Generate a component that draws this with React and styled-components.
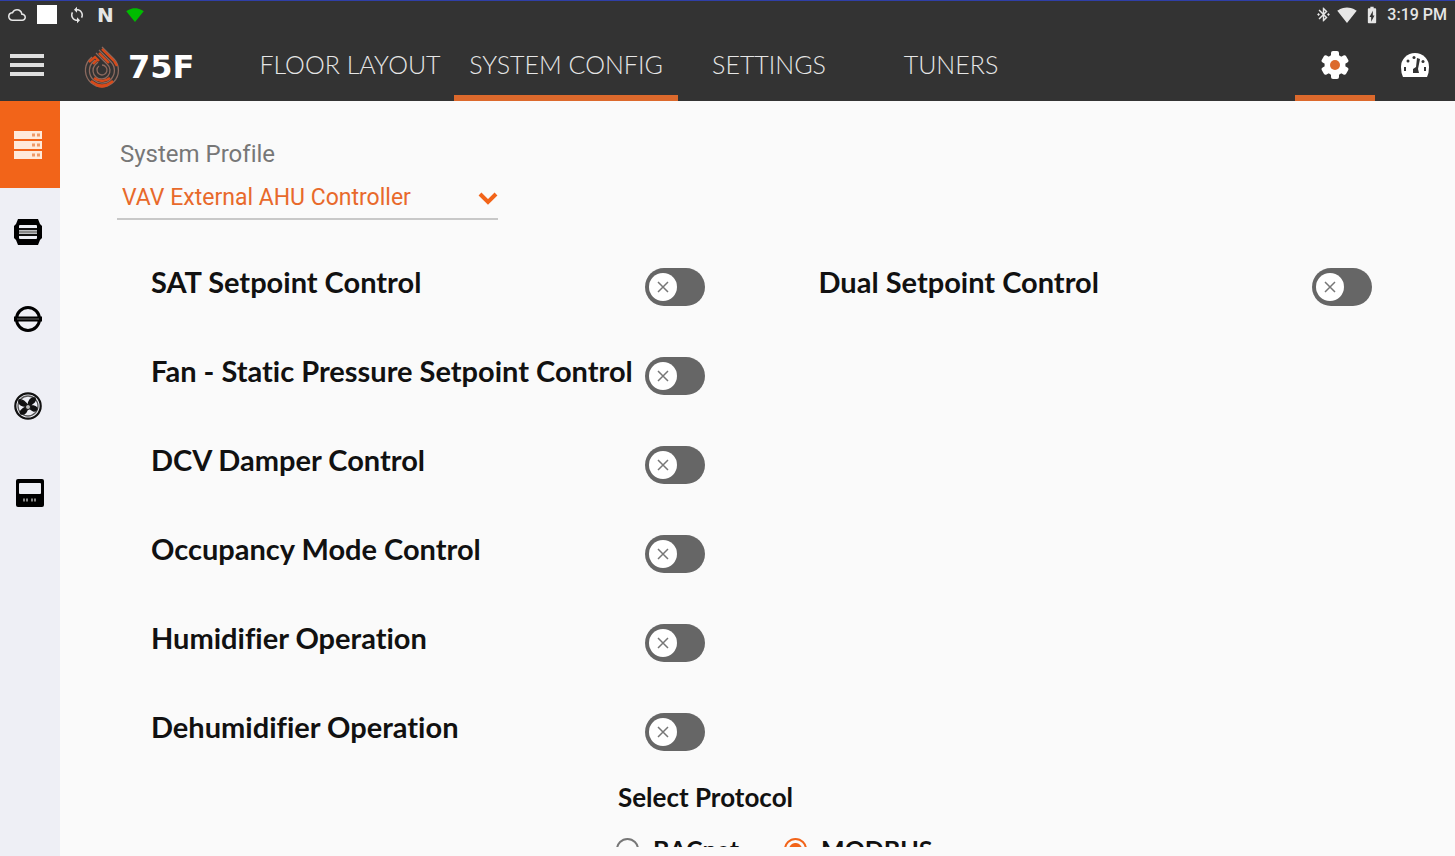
import React, { useState } from "react";
import styled, { createGlobalStyle, css } from "styled-components";
import {
  MdBatteryChargingFull,
  MdBluetoothConnected,
  MdSignalWifi4Bar,
  MdOutlineCloud,
  MdSync,
} from "react-icons/md";

const GlobalStyle = createGlobalStyle`
  * {
    box-sizing: border-box;
  }

  body {
    margin: 0;
    background-color: #fafafa;
    font-family: Lato, "Liberation Sans", sans-serif;
    font-variant-ligatures: none;
    color: #111;
  }
`;

// Styled components
const Screen = styled.div`
  display: flex;
  flex-direction: column;
  height: 100vh;
  overflow: hidden;
`;

const StatusBar = styled.div`
  display: flex;
  flex: none;
  align-items: center;
  justify-content: space-between;
  height: 28px;
  padding: 0 8px;
  border-top: 1px solid #2f3fa8;
  background-color: #333;
  color: #e6e6e6;
  font-family: Roboto, sans-serif;
  font-size: 16px;
  font-weight: 500;
`;

const StatusGroup = styled.div`
  display: flex;
  align-items: center;
  gap: ${(props) => props.$gap};
`;

const WhiteSquare = styled.span`
  width: 20px;
  height: 19px;
  background-color: #fff;
`;

const NotificationLetter = styled.span`
  width: 18px;
  font-family: "DejaVu Sans", sans-serif;
  font-size: 20px;
  font-weight: 700;
  line-height: 20px;
`;

const Header = styled.header`
  display: flex;
  flex: none;
  align-items: stretch;
  height: 73px;
  background-color: #333;
`;

const MenuButton = styled.button`
  display: flex;
  align-items: center;
  width: 60px;
  padding: 0 0 0 10px;
  border: none;
  background: none;
`;

const Brand = styled.a`
  display: flex;
  align-items: center;
  gap: 8px;
  width: 186px;
  padding: 4px 0 0 24px;
  color: #fff;
  text-decoration: none;
`;

const BrandName = styled.span`
  font-family: "DejaVu Sans", sans-serif;
  font-size: 32px;
  font-weight: 700;
  line-height: 32px;
`;

const Tabs = styled.nav`
  display: flex;
  flex: 1;
`;

const activeBar = css`
  border-bottom: 6px solid ${(props) => (props.$active ? "#dc692c" : "transparent")};
`;

const Tab = styled.a`
  display: flex;
  align-items: center;
  justify-content: center;
  min-width: ${(props) => props.$width};
  padding: 4px 12px 0;
  ${activeBar}
  color: #e6e6e6;
  font-size: 25px;
  font-weight: 300;
  text-decoration: none;
  white-space: nowrap;
`;

const HeaderButton = styled.button`
  display: flex;
  align-items: center;
  justify-content: center;
  width: 80px;
  padding: 6px 0 0;
  border: none;
  ${activeBar}
  background: none;
`;

const Body = styled.div`
  display: flex;
  flex: 1;
  min-height: 0;
`;

const Sidebar = styled.nav`
  flex: none;
  width: 60px;
  background-color: #eeeff5;
`;

const SideLink = styled.a`
  display: flex;
  align-items: center;
  height: 87px;
  padding-left: 14px;
  background-color: ${(props) => (props.$active ? "#f26419" : "transparent")};
  color: #000;
`;

const Content = styled.main`
  flex: 1;
  margin-bottom: 9px;
  padding: 38px 83px 0 57px;
  overflow: hidden;
`;

const ProfileField = styled.div`
  display: flex;
  flex-direction: column;
  width: 381px;
  font-family: Roboto, sans-serif;
`;

const ProfileLabel = styled.label`
  padding-left: 3px;
  color: #777;
  font-size: 24px;
  line-height: 30px;
`;

const SelectBox = styled.div`
  display: grid;
  align-items: center;
  margin-top: 8px;
  border-bottom: 2px solid #c8c8c8;

  & > * {
    grid-area: 1 / 1;
  }

  svg {
    justify-self: end;
    pointer-events: none;
  }
`;

const Select = styled.select`
  height: 41px;
  padding: 0 30px 0 5px;
  border: none;
  appearance: none;
  background: none;
  color: #e8692b;
  font-family: inherit;
  font-size: 23px;
`;

const OptionGrid = styled.div`
  display: grid;
  grid-template-columns: 1fr 1fr;
  column-gap: 114px;
  grid-auto-rows: 89px;
  margin: 22px 0 0 34px;
`;

const OptionRow = styled.div`
  display: flex;
  align-items: center;
  justify-content: space-between;
  grid-column: ${(props) => props.$column};
`;

const OptionLabel = styled.label`
  padding-bottom: 10px;
  font-size: 29px;
  font-weight: 700;
  line-height: 36px;
  white-space: nowrap;
`;

const Switch = styled.input`
  flex: none;
  width: 60px;
  height: 38px;
  margin: 0;
  border-radius: 19px;
  appearance: none;
  background: ${(props) => (props.checked ? "#e8692b" : "#666")};
`;

const SwitchBox = styled.span`
  display: grid;
  align-items: center;

  & > * {
    grid-area: 1 / 1;
  }

  svg {
    margin: 0 4px;
    justify-self: ${(props) => (props.$on ? "end" : "start")};
    pointer-events: none;
  }
`;

const Protocol = styled.fieldset`
  margin: 6px 0 0 499px;
  padding: 0;
  border: none;
`;

const ProtocolTitle = styled.legend`
  padding: 0 0 0 2px;
  font-size: 26px;
  font-weight: 700;
  line-height: 30px;
`;

const RadioRow = styled.div`
  display: flex;
  margin-top: 22px;
`;

const RadioLabel = styled.label`
  display: flex;
  align-items: center;
  gap: 14px;
  width: 168px;
  font-size: 25px;
  font-weight: 700;
  line-height: 30px;
`;

const Radio = styled.input`
  width: 23px;
  height: 23px;
  margin: 0;
  border: 2px solid ${(props) => (props.checked ? "#f26419" : "#777")};
  border-radius: 50%;
  appearance: none;
  background: ${(props) =>
    props.checked ? "radial-gradient(circle, #f26419 6px, transparent 7px)" : "none"};
`;

// Icons
const MenuIcon = () => (
  <svg width="34" height="24" viewBox="0 0 34 24">
    <path d="M0 3h34M0 12h34M0 21h34" stroke="#e0e0e0" strokeWidth="4" />
  </svg>
);

const FlameIcon = () => (
  <svg width="36" height="44" viewBox="0 0 36 44" fill="none">
    <g stroke="#8c6a5f" strokeWidth="1.3">
      <path d="M18 2 30 14a16.5 16.5 0 1 1-25 1l3-3" />
      <path d="m15 5 12 12a12.5 12.5 0 1 1-19 1l3-3" />
      <path d="m12 8 11 11a8.500 8.500 0 1 1-12 1l3-3" />
      <path d="M18 20a5 5 0 1 1-3 1" />
    </g>
    <g stroke="#d84a1a" strokeWidth="2.4">
      <path d="m18 4 12 12M15 8l10 10" />
      <path d="m5 17 6-5 4 4M9 19l4-4" />
      <path d="M7 36q11 9 22 0M10 33q8 6 16 0M12 40q6 3 12 0" />
      <path d="m30 16 3 5" />
    </g>
  </svg>
);

const GearIcon = () => (
  <svg width="28" height="28" viewBox="0 0 28 28">
    <g fill="#fff">
      <circle cx="14" cy="14" r="10.500" />
      {[0, 60, 120].map((angle) => (
        <rect key={angle} x="10" y="0" width="8" height="28" rx="2" transform={`rotate(${angle} 14 14)`} />
      ))}
    </g>
    <circle cx="14" cy="14" r="5" fill="#dc692c" />
  </svg>
);

const GaugeIcon = () => (
  <svg width="28" height="24" viewBox="0 0 28 24">
    <path d="M2 24q-2-4-2-10a14 14 0 0 1 28 0q0 6-2 10z" fill="#fff" />
    <g fill="#333">
      <circle cx="13" cy="4.500" r="1.500" />
      <circle cx="7" cy="8" r="1.500" />
      <path d="M3 14h2v4H3zM23 14h2v4h-2z" />
      <circle cx="22" cy="8.500" r="1.500" />
      <path d="m16 5 3 1-2 10 1 4h-6v-4l3-2z" />
    </g>
  </svg>
);

const ServerIcon = () => (
  <svg width="28" height="30" viewBox="0 0 28 30">
    {[1, 11, 21].map((y) => (
      <g key={y}>
        <rect y={y} width="28" height="8" fill="#ffeada" />
        <path d={`M18 ${y + 4}h3M23 ${y + 4}h3`} stroke="#f09a66" strokeWidth="3" />
      </g>
    ))}
  </svg>
);

const HubIcon = () => (
  <svg width="28" height="26" viewBox="0 0 28 26">
    <path d="M4 0h20l2 5 2 2v12l-2 2-2 5H4l-2-5-2-2V7l2-2z" />
    <rect x="5" y="6" width="18" height="14" rx="1" fill="#eeeff5" />
    <path d="M5 10h18M5 16h18" stroke="#111" strokeWidth="2" />
    <path d="M5 13h18" stroke="#888" strokeWidth="3" />
  </svg>
);

const DamperIcon = () => (
  <svg width="28" height="28" viewBox="0 0 28 28" fill="none" stroke="#000">
    <circle cx="14" cy="14" r="11.500" strokeWidth="3" />
    <path d="M0 14h28" strokeWidth="5" />
    <path d="M3 14h22" stroke="#333" strokeWidth="2" />
  </svg>
);

const FanIcon = () => (
  <svg width="28" height="28" viewBox="0 0 28 28" fill="none" stroke="#111">
    <circle cx="14" cy="14" r="12.700" strokeWidth="2.200" />
    <circle cx="14" cy="14" r="10" stroke="#555" strokeWidth="1.300" />
    <path
      d="M14 14C8 15 4 12 5 8q4-1 9 6 1-9 7-8 2 4-7 8 8-1 9 3-3 5-9-3-1 9-7 8-3-3 7-8z"
      fill="#111"
      strokeWidth="1.500"
    />
    <circle cx="14" cy="15" r="2.500" fill="#bbb" strokeWidth="1" />
  </svg>
);

const ThermostatIcon = () => (
  <svg width="30" height="28" viewBox="0 0 30 28">
    <rect x="2" width="28" height="28" rx="2" />
    <rect x="5" y="4" width="22" height="11" rx="1" fill="#eeeff5" />
    <path d="M9 21h6M17 21h5" stroke="#888" strokeWidth="3" strokeDasharray="2 1" />
  </svg>
);

const ChevronIcon = () => (
  <svg width="20" height="14" viewBox="0 0 20 14" fill="none">
    <path d="m2 3 8 8 8-8" stroke="#f26419" strokeWidth="4" />
  </svg>
);

const KnobIcon = () => (
  <svg width="28" height="28" viewBox="0 0 28 28">
    <circle cx="14" cy="14" r="14" fill="#fff" />
    <path d="m9 9 10 10M19 9 9 19" stroke="#777" strokeWidth="1.500" />
  </svg>
);

const tabs = [
  { name: "FLOOR LAYOUT", width: "208px" },
  { name: "SYSTEM CONFIG", width: "224px", active: true },
  { name: "SETTINGS", width: "182px" },
  { name: "TUNERS", width: "182px" },
];

const sideLinks = [
  { name: "System", icon: ServerIcon, active: true },
  { name: "Control hub", icon: HubIcon },
  { name: "Damper", icon: DamperIcon },
  { name: "Fan", icon: FanIcon },
  { name: "Thermostat", icon: ThermostatIcon },
];

const options = [
  { name: "SAT Setpoint Control", column: 1 },
  { name: "Dual Setpoint Control", column: 2 },
  { name: "Fan - Static Pressure Setpoint Control", column: 1 },
  { name: "DCV Damper Control", column: 1 },
  { name: "Occupancy Mode Control", column: 1 },
  { name: "Humidifier Operation", column: 1 },
  { name: "Dehumidifier Operation", column: 1 },
];

// Components
function Option({ name, column }) {
  const [on, setOn] = useState(false);
  const id = name.toLowerCase().replace(/\W+/g, "-");

  return (
    <OptionRow $column={column}>
      <OptionLabel htmlFor={id}>{name}</OptionLabel>
      <SwitchBox $on={on}>
        <Switch id={id} type="checkbox" checked={on} onChange={() => setOn(!on)} />
        <KnobIcon />
      </SwitchBox>
    </OptionRow>
  );
}

function App() {
  const [protocol, setProtocol] = useState("MODBUS");

  return (
    <Screen>
      <GlobalStyle />
      <StatusBar>
        <StatusGroup $gap="11px">
          <MdOutlineCloud size={18} />
          <WhiteSquare />
          <MdSync size={18} />
          <NotificationLetter>N</NotificationLetter>
          <MdSignalWifi4Bar size={18} color="#0b0" />
        </StatusGroup>
        <StatusGroup $gap="5px">
          <MdBluetoothConnected size={17} />
          <MdSignalWifi4Bar size={20} />
          <MdBatteryChargingFull size={20} />
          <span>3:19 PM</span>
        </StatusGroup>
      </StatusBar>
      <Header>
        <MenuButton aria-label="Menu">
          <MenuIcon />
        </MenuButton>
        <Brand href="#home">
          <FlameIcon />
          <BrandName>75F</BrandName>
        </Brand>
        <Tabs>
          {tabs.map((tab) => (
            <Tab key={tab.name} href="#tab" $width={tab.width} $active={tab.active}>
              {tab.name}
            </Tab>
          ))}
        </Tabs>
        <HeaderButton aria-label="Configuration" $active>
          <GearIcon />
        </HeaderButton>
        <HeaderButton aria-label="Dashboard">
          <GaugeIcon />
        </HeaderButton>
      </Header>
      <Body>
        <Sidebar>
          {sideLinks.map(({ name, icon: Icon, active }) => (
            <SideLink key={name} href="#section" aria-label={name} $active={active}>
              <Icon />
            </SideLink>
          ))}
        </Sidebar>
        <Content>
          <ProfileField>
            <ProfileLabel htmlFor="profile">System Profile</ProfileLabel>
            <SelectBox>
              <Select id="profile" defaultValue="vav">
                <option value="vav">VAV External AHU Controller</option>
              </Select>
              <ChevronIcon />
            </SelectBox>
          </ProfileField>
          <OptionGrid>
            {options.map((option) => (
              <Option key={option.name} {...option} />
            ))}
          </OptionGrid>
          <Protocol>
            <ProtocolTitle>Select Protocol</ProtocolTitle>
            <RadioRow>
              {["BACnet", "MODBUS"].map((name) => (
                <RadioLabel key={name}>
                  <Radio
                    type="radio"
                    name="protocol"
                    checked={protocol === name}
                    onChange={() => setProtocol(name)}
                  />
                  {name}
                </RadioLabel>
              ))}
            </RadioRow>
          </Protocol>
        </Content>
      </Body>
    </Screen>
  );
}

export default App;
